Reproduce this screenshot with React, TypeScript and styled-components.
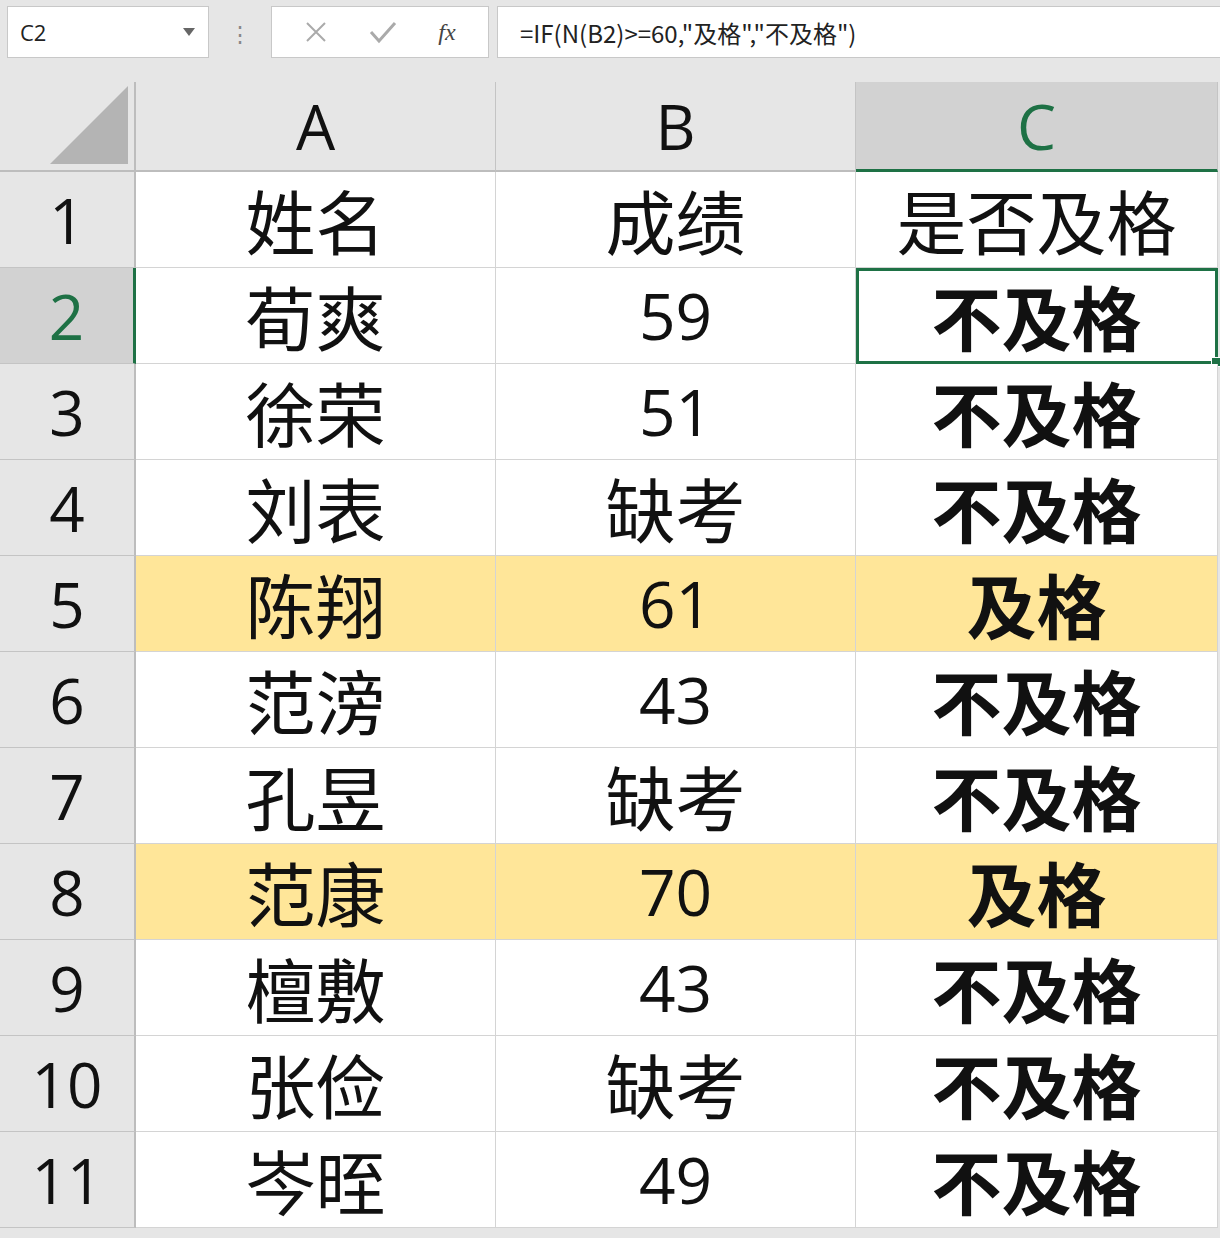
import styled, { createGlobalStyle } from "styled-components";

const Global = createGlobalStyle`
  body { margin: 0; background: #e6e6e6; font-family: "Noto Sans CJK SC", "Open Sans", sans-serif; }
`;

const rows: [string, string, string, boolean][] = [
  ["荀爽", "59", "不及格", false],
  ["徐荣", "51", "不及格", false],
  ["刘表", "缺考", "不及格", false],
  ["陈翔", "61", "及格", true],
  ["范滂", "43", "不及格", false],
  ["孔昱", "缺考", "不及格", false],
  ["范康", "70", "及格", true],
  ["檀敷", "43", "不及格", false],
  ["张俭", "缺考", "不及格", false],
  ["岑晊", "49", "不及格", false],
];

const Page = styled.div`
  width: 1220px;
  height: 1238px;
  overflow: hidden;
  background: #e6e6e6;
`;
const Toolbar = styled.div`
  display: flex;
  align-items: center;
  height: 64px;
  padding: 0 0 0 7px;
  gap: 0;
`;
const Box = styled.div<{ $w: number }>`
  width: ${(p) => p.$w}px;
  height: 52px;
  background: #fff;
  border: 1px solid #c8c8c8;
  box-sizing: border-box;
  display: flex;
  align-items: center;
`;
const NameBox = styled(Box)`
  justify-content: space-between;
  padding: 0 12px 0 12px;
  font-family: "Open Sans", sans-serif;
  font-size: 22px;
  color: #222;
`;
const Dots = styled.div`
  width: 62px;
  text-align: center;
  color: #888;
  font-size: 22px;
  line-height: 1;
`;
const Buttons = styled(Box)`
  justify-content: space-around;
  padding: 0 12px;
  color: #aaa;
  margin-right: 8px;
`;
const Fx = styled.span`
  font-family: "Liberation Serif", serif;
  font-style: italic;
  font-size: 24px;
  color: #444;
`;
const Formula = styled(Box)`
  flex: 1;
  border-right: none;
  padding-left: 22px;
  font-size: 24px;
  color: #222;
`;
const Grid = styled.div`
  display: grid;
  grid-template-columns: 136px 360px 360px 362px;
  grid-auto-rows: 96px;
  grid-template-rows: 90px;
  margin-top: 18px;
`;
const Corner = styled.div`
  background: #e6e6e6;
  border-right: 2px solid #bdbdbd;
  border-bottom: 2px solid #bdbdbd;
  display: flex;
  align-items: flex-end;
  justify-content: flex-end;
  padding: 0 6px 6px 0;
`;
const ColHead = styled.div<{ $sel?: boolean }>`
  background: ${(p) => (p.$sel ? "#d2d2d2" : "#e6e6e6")};
  border-right: 1px solid #c4c4c4;
  border-bottom: ${(p) => (p.$sel ? "3px solid #1e7145" : "2px solid #bdbdbd")};
  display: flex;
  align-items: center;
  justify-content: center;
  font-family: "Open Sans", sans-serif;
  font-size: 62px;
  color: ${(p) => (p.$sel ? "#1e7145" : "#111")};
`;
const RowHead = styled.div<{ $sel?: boolean }>`
  background: ${(p) => (p.$sel ? "#d2d2d2" : "#e6e6e6")};
  border-right: ${(p) => (p.$sel ? "3px solid #1e7145" : "2px solid #bdbdbd")};
  border-bottom: 1px solid #c4c4c4;
  display: flex;
  align-items: center;
  justify-content: center;
  font-family: "Open Sans", sans-serif;
  font-size: 62px;
  color: ${(p) => (p.$sel ? "#1e7145" : "#111")};
`;
const Cell = styled.div<{ $hl?: boolean; $bold?: boolean; $num?: boolean }>`
  background: ${(p) => (p.$hl ? "#ffe699" : "#fff")};
  border-right: 1px solid #d4d4d4;
  border-bottom: 1px solid #d4d4d4;
  display: flex;
  align-items: center;
  justify-content: center;
  font-size: ${(p) => (p.$num ? "64px" : "70px")};
  font-family: ${(p) => (p.$num ? `"Open Sans", sans-serif` : `"Noto Sans CJK SC", sans-serif`)};
  font-weight: ${(p) => (p.$bold ? 700 : 400)};
  color: #111;
  position: relative;
  box-sizing: border-box;
`;
const Active = styled(Cell)`
  outline: 3px solid #1e7145;
  outline-offset: -3px;
  &::after {
    content: "";
    position: absolute;
    right: -4px;
    bottom: -4px;
    width: 8px;
    height: 8px;
    background: #1e7145;
    border: 1px solid #fff;
  }
`;

export default function App() {
  return (
    <Page>
      <Global />
      <Toolbar>
        <NameBox $w={202}>
          C2
          <svg width="14" height="10" viewBox="0 0 14 10"><path d="M1 1h12L7 9z" fill="#666" /></svg>
        </NameBox>
        <Dots>⋮</Dots>
        <Buttons $w={218}>
          <svg width="24" height="24" viewBox="0 0 24 24"><path d="M3 3l18 18M21 3L3 21" stroke="#aaa" strokeWidth="2" /></svg>
          <svg width="28" height="24" viewBox="0 0 28 24"><path d="M2 12l8 9L26 3" stroke="#aaa" strokeWidth="3" fill="none" /></svg>
          <Fx>fx</Fx>
        </Buttons>
        <Formula $w={0}>=IF(N(B2)&gt;=60,"及格","不及格")</Formula>
      </Toolbar>
      <Grid>
        <Corner>
          <svg width="78" height="78" viewBox="0 0 78 78"><path d="M78 0V78H0z" fill="#b4b4b4" /></svg>
        </Corner>
        <ColHead>A</ColHead>
        <ColHead>B</ColHead>
        <ColHead $sel>C</ColHead>
        <RowHead>1</RowHead>
        <Cell>姓名</Cell>
        <Cell>成绩</Cell>
        <Cell>是否及格</Cell>
        {rows.map(([name, score, res, hl], i) => {
          const C = i === 0 ? Active : Cell;
          return [
            <RowHead key={`h${i}`} $sel={i === 0}>{i + 2}</RowHead>,
            <Cell key={`a${i}`} $hl={hl}>{name}</Cell>,
            <Cell key={`b${i}`} $hl={hl} $num={/\d/.test(score)}>{score}</Cell>,
            <C key={`c${i}`} $hl={hl} $bold>{res}</C>,
          ];
        })}
      </Grid>
    </Page>
  );
}
